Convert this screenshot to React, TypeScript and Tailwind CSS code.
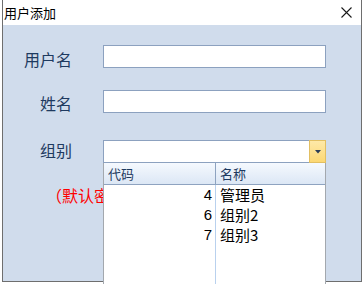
import React from "react";

const cjk = { fontFamily: '"Noto Sans CJK SC", "Noto Sans", sans-serif' };

export default function App() {
  const rows = [
    { code: "4", name: "管理员" },
    { code: "6", name: "组别2" },
    { code: "7", name: "组别3" },
  ];
  return (
    <div className="relative w-[364px] h-[284px] overflow-hidden bg-white" style={cjk}>
      <div className="ml-[2px] w-[360px] h-[282px] flex flex-col border-x border-b border-[#6e6e6e]">
        {/* title bar */}
        <div className="h-[25px] bg-white flex items-center justify-between pl-[1px] pr-[9px]">
          <span className="text-[13px] leading-none text-black">用户添加</span>
          <svg width="11" height="11" viewBox="0 0 11 11">
            <path d="M0.5 0.5 L10.5 10.5 M10.5 0.5 L0.5 10.5" stroke="#1a1a1a" strokeWidth="1.1" />
          </svg>
        </div>
        {/* body */}
        <div className="flex-1 bg-[#d0dcec] flex flex-col">
          <div className="flex items-center mt-[20px] h-[23px]">
            <div className="w-[69px] text-right text-[16px] leading-none text-[#1e3a60] pt-[5px]">用户名</div>
            <div className="ml-[31px] w-[223px] h-[23px] bg-white border border-[#8ca1bf]" />
          </div>
          <div className="flex items-center mt-[22px] h-[23px]">
            <div className="w-[69px] text-right text-[16px] leading-none text-[#1e3a60] pt-[3px]">姓名</div>
            <div className="ml-[31px] w-[223px] h-[23px] bg-white border border-[#8ca1bf]" />
          </div>
          <div className="flex items-center mt-[27px] h-[23px]">
            <div className="w-[69px] text-right text-[16px] leading-none text-[#1e3a60] pb-[3px]">组别</div>
            <div className="ml-[31px] w-[223px] h-[23px] bg-white border border-[#8ca1bf] flex justify-end">
              <div className="w-[17px] h-[23px] -mt-[1px] -mr-[1px] bg-gradient-to-b from-[#fee9a8] to-[#fcd873] border border-[#e2bf62] flex items-center justify-center">
                <svg width="6" height="4" viewBox="0 0 6 4">
                  <path d="M0 0 H6 L3 3.5 Z" fill="#2b3d57" />
                </svg>
              </div>
            </div>
          </div>
          <div className="mt-[22px] ml-[43px] w-[57px] overflow-hidden text-[16px] leading-[20px] text-[#ff0000] whitespace-nowrap">
            （默认密码：123456）
          </div>
        </div>
      </div>

      {/* dropdown list */}
      <div className="absolute left-[103px] top-[163px] w-[223px] h-[121px] bg-white border-x border-[#a3a8ae] flex flex-col">
        <div className="h-[22px] flex border-b border-[#8ea3c0] bg-gradient-to-b from-[#f5f9fe] to-[#dce7f5]">
          <div className="w-[112px] border-r border-[#8ea3c0] pl-[4px] flex items-center text-[13px] leading-none text-[#1e3a60]">代码</div>
          <div className="flex-1 pl-[4px] flex items-center text-[13px] leading-none text-[#1e3a60]">名称</div>
        </div>
        <div className="flex-1 flex">
          <div className="w-[112px] border-r border-[#b9d1ee] flex flex-col">
            {rows.map((r) => (
              <div key={r.code} className="h-[20px] pr-[3px] text-right text-[15px] leading-[20px] text-black" style={{ fontFamily: '"Liberation Sans", "Noto Sans CJK SC", sans-serif' }}>
                {r.code}
              </div>
            ))}
          </div>
          <div className="flex-1 flex flex-col">
            {rows.map((r) => (
              <div key={r.code} className="h-[20px] pl-[4px] text-[15px] leading-[20px] text-black whitespace-nowrap">
                {r.name}
              </div>
            ))}
          </div>
        </div>
      </div>
    </div>
  );
}
